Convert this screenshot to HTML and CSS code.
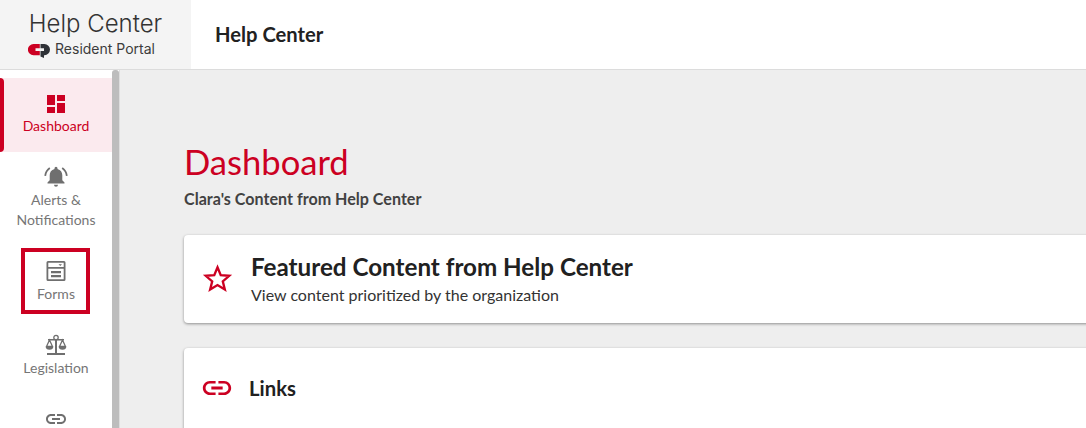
FILE: index.html
```html
<!DOCTYPE html>
<html lang="en">
<head>
    <meta charset="UTF-8">
    <meta name="viewport" content="width=device-width, initial-scale=1.0">
    <title>Help Center</title>
    <link rel="stylesheet" href="styles.css">
</head>
<body>
    <header class="topbar">
        <div class="brand">
            <div class="brand-title">Help Center</div>
            <div class="brand-sub">
                <svg class="brand-logo" width="22" height="14" viewBox="0 0 22 14">
                    <path fill="#cc0022" d="M5.500 0H11.800V4.300H7.500V6.900H11.800V11.200H5.500A5.600 5.600 0 0 1 5.500 0z"/>
                    <path fill="#2f3237" d="M12.500 0H16.400a5.600 5.600 0 0 1 0 11.200H16V14l-3.500-1.500V6.900H16V4.300H12.500z"/>
                </svg>
                <span>Resident Portal</span>
            </div>
        </div>
        <h1 class="topbar-title">Help Center</h1>
    </header>

    <div class="layout">
        <nav class="sidebar">
            <div class="nav-list">
                <a class="nav-item active">
                    <svg class="nav-icon" viewBox="0 0 24 24"><path d="M3 4h8v10H3zM13 4h8v6h-8zM3 16h8v6H3zM13 12h8v10h-8z"/></svg>
                    <span>Dashboard</span>
                </a>
                <a class="nav-item">
                    <svg class="nav-icon" viewBox="0 0 24 24">
                        <path d="M12 1.800a1.500 1.500 0 0 1 1.500 1.500v.700c3.200.8 4.800 3.400 4.800 6.300v5l2.200 2.200v1H3.500v-1l2.200-2.200v-5c0-2.900 1.600-5.500 4.800-6.300v-.700A1.500 1.500 0 0 1 12 1.800zM10 19.800h4a2 2 0 0 1-4 0z"/>
                        <path fill="none" stroke="#6f6f6f" stroke-width="1.800" d="M5.800 3A11 11 0 0 0 1.200 10.800M18.200 3a11 11 0 0 1 4.600 7.800"/>
                    </svg>
                    <span>Alerts &amp;<br>Notifications</span>
                </a>
                <a class="nav-item marked">
                    <svg class="nav-icon" viewBox="0 0 24 24">
                        <path fill-rule="evenodd" d="M4 2h16a1.500 1.500 0 0 1 1.500 1.500v17A1.500 1.500 0 0 1 20 22H4a1.500 1.500 0 0 1-1.500-1.500v-17A1.500 1.500 0 0 1 4 2zm.3 1.800v16.400h15.400V3.800z"/>
                        <path d="M3 8h18v1.800H3zM7 12h10v2.200H7zM7 16h10v2.200H7zM14.500 5.200h3.500l-1.750 1.700z"/>
                    </svg>
                    <span>Forms</span>
                </a>
                <a class="nav-item">
                    <svg class="nav-icon" viewBox="0 0 24 24">
                        <path d="M11 5.500h2V20h-2zM3 20h18v2H3zM4 6h16v1.500H4z"/>
                        <circle cx="12" cy="4.500" r="2.200" fill="#fff" stroke="#6f6f6f" stroke-width="1.300"/>
                        <path fill="none" stroke="#6f6f6f" stroke-width="1.300" d="M5.500 7 2.500 13.500h6zM18.500 7l-3 6.500h6z"/>
                        <path d="M1.800 13.500h7.400a3.700 3.200 0 0 1-7.400 0zM14.800 13.500h7.400a3.700 3.200 0 0 1-7.400 0z"/>
                    </svg>
                    <span>Legislation</span>
                </a>
                <a class="nav-item" aria-label="Links">
                    <svg class="nav-icon" viewBox="0 0 24 24"><path d="M3.900 12c0-1.710 1.390-3.100 3.100-3.100h4V7H7c-2.760 0-5 2.240-5 5s2.240 5 5 5h4v-1.900H7c-1.710 0-3.100-1.390-3.100-3.100zM8 13h8v-2H8v2zm9-6h-4v1.900h4c1.710 0 3.100 1.390 3.100 3.100s-1.390 3.100-3.100 3.100h-4V17h4c2.760 0 5-2.240 5-5s-2.240-5-5-5z"/></svg>
                </a>
            </div>
            <div class="scrollbar"></div>
        </nav>

        <main class="content">
            <h2 class="page-title">Dashboard</h2>
            <p class="page-sub">Clara's Content from Help Center</p>

            <section class="card card-featured">
                <svg class="card-icon" width="31" height="31" viewBox="0 0 24 24"><path fill="none" stroke="#cc0022" stroke-width="1.800" d="M12 3.300l2.500 6.100 6.600.5-5 4.300 1.600 6.400-5.700-3.500-5.700 3.500 1.600-6.400-5-4.300 6.600-.5z"/></svg>
                <div>
                    <div class="card-title">Featured Content from Help Center</div>
                    <div class="card-desc">View content prioritized by the organization</div>
                </div>
            </section>

            <section class="card card-links">
                <svg class="card-icon" width="34" height="34" viewBox="0 0 24 24"><path fill="#cc0022" d="M3.900 12c0-1.710 1.390-3.100 3.100-3.100h4V7H7c-2.760 0-5 2.240-5 5s2.240 5 5 5h4v-1.900H7c-1.710 0-3.100-1.390-3.100-3.100zM8 13h8v-2H8v2zm9-6h-4v1.900h4c1.710 0 3.100 1.390 3.100 3.100s-1.390 3.100-3.100 3.100h-4V17h4c2.760 0 5-2.240 5-5s-2.240-5-5-5z"/></svg>
                <div class="links-title">Links</div>
            </section>
        </main>
    </div>
</body>
</html>
```

FILE: styles.css
```css
* {
    box-sizing: border-box;
}
html, body {
    height: 100%;
}
body {
    margin: 0;
    overflow: hidden;
    display: flex;
    flex-direction: column;
    font-family: Lato, "Liberation Sans", sans-serif;
    color: #212121;
    background: #fff;
}

/* Top bar */
.topbar {
    display: flex;
    align-items: center;
    height: 70px;
    flex-shrink: 0;
    border-bottom: 1px solid #dcdcdc;
}
.brand {
    width: 191px;
    height: 69px;
    padding-top: 10px;
    background-color: #f4f4f4;
    text-align: center;
}
.brand-title {
    font-family: Inter, sans-serif;
    font-size: 24px;
    font-weight: 300;
    line-height: 28px;
    color: #333;
}
.brand-sub {
    display: flex;
    align-items: center;
    justify-content: center;
    gap: 5px;
    margin-top: 1px;
    padding-right: 8px;
    font-family: Inter, sans-serif;
    font-size: 14px;
    line-height: 20px;
    color: #3c3c3c;
}
.brand-logo {
    margin-top: 3px;
}
.topbar-title {
    margin: 0 0 2px 24px;
    font-size: 20.200px;
    font-weight: 700;
    color: #212121;
}

/* Sidebar */
.layout {
    display: flex;
    flex: 1;
    min-height: 0;
}
.sidebar {
    display: flex;
    flex-shrink: 0;
    width: 120px;
    border-right: 1px solid #dedede;
    overflow: hidden;
}
.nav-list {
    width: 112px;
    padding-top: 8px;
    flex-shrink: 0;
}
.scrollbar {
    width: 7px;
    background-color: #bdbdbd;
    border-radius: 3px 3px 0 0;
}
.nav-item {
    position: relative;
    display: flex;
    flex-direction: column;
    align-items: center;
    padding: 13px 0 16px;
    font-size: 14px;
    line-height: 20px;
    text-align: center;
    color: #767676;
}
.nav-icon {
    width: 24px;
    height: 24px;
    margin-bottom: 1px;
    fill: #6f6f6f;
}
.nav-item.active {
    color: #cc0022;
    background-color: #fbeaee;
}
.nav-item.active .nav-icon {
    fill: #cc0022;
}
.nav-item.active::before {
    content: "";
    position: absolute;
    left: 0;
    top: 0;
    bottom: 0;
    width: 4px;
    background-color: #cc0022;
    border-radius: 0 4px 4px 0;
}
/* red box around the Forms entry */
.nav-item.marked::after {
    content: "";
    box-sizing: border-box;
    position: absolute;
    left: 21px;
    top: 2px;
    width: 69px;
    height: 66px;
    border: 4px solid #cc0022;
}

/* Main area */
.content {
    flex: 1;
    min-width: 0;
    padding: 72px 0 0 64px;
    background-color: #eeeeee;
    overflow: hidden;
}
.page-title {
    margin: 0;
    font-size: 34.6px;
    font-weight: 400;
    line-height: 40px;
    color: #cc0022;
}
.page-sub {
    margin: 7px 0 0;
    font-size: 16.1px;
    font-weight: 700;
    line-height: 20px;
    color: #424242;
}
.card {
    display: flex;
    align-items: center;
    width: 1000px;
    background: #fff;
    border-radius: 4px;
    box-shadow: 0 1px 3px rgba(0, 0, 0, 0.4);
}
.card-featured {
    height: 88px;
    margin-top: 26px;
    padding: 0 0 2px 18px;
    gap: 18px;
}
.card-links {
    height: 100px;
    margin-top: 25px;
    padding: 0 0 20px 16px;
    gap: 15px;
}
.card-title {
    margin-bottom: 3px;
    font-size: 24.2px;
    font-weight: 700;
    line-height: 30px;
    color: #212121;
}
.card-desc {
    font-size: 16px;
    line-height: 20px;
    color: #333;
}
.links-title {
    font-size: 20.3px;
    font-weight: 700;
    color: #212121;
}
```
